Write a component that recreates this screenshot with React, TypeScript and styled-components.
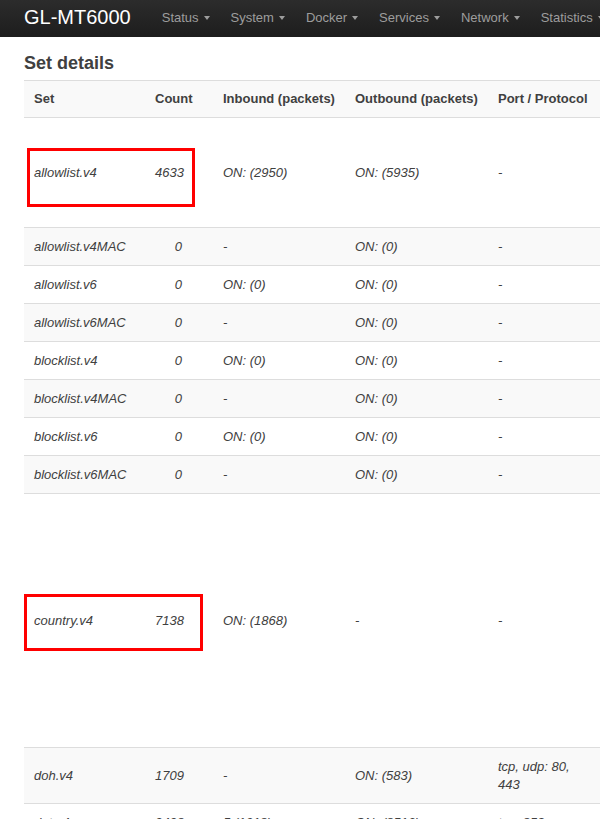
import React from "react";
import styled, {createGlobalStyle} from "styled-components";

type SetRow = {
    name: string;
    count: string;
    inbound: string;
    outbound: string;
    port: string;
    height?: number;
    highlight?: {left: number; top: number; width: number; height: number};
};

const menu = ["Status", "System", "Docker", "Services", "Network", "Statistics"];

const rows: SetRow[] = [
    {name: "allowlist.v4", count: "4633", inbound: "ON: (2950)", outbound: "ON: (5935)", port: "-", height: 110,
        highlight: {left: 3, top: 30, width: 168, height: 59}},
    {name: "allowlist.v4MAC", count: "0", inbound: "-", outbound: "ON: (0)", port: "-"},
    {name: "allowlist.v6", count: "0", inbound: "ON: (0)", outbound: "ON: (0)", port: "-"},
    {name: "allowlist.v6MAC", count: "0", inbound: "-", outbound: "ON: (0)", port: "-"},
    {name: "blocklist.v4", count: "0", inbound: "ON: (0)", outbound: "ON: (0)", port: "-"},
    {name: "blocklist.v4MAC", count: "0", inbound: "-", outbound: "ON: (0)", port: "-"},
    {name: "blocklist.v6", count: "0", inbound: "ON: (0)", outbound: "ON: (0)", port: "-"},
    {name: "blocklist.v6MAC", count: "0", inbound: "-", outbound: "ON: (0)", port: "-"},
    {name: "country.v4", count: "7138", inbound: "ON: (1868)", outbound: "-", port: "-", height: 254,
        highlight: {left: 0, top: 100, width: 179, height: 57}},
    {name: "doh.v4", count: "1709", inbound: "-", outbound: "ON: (583)", port: "tcp, udp: 80, 443"},
    {name: "dot.v4", count: "2428", inbound: "5 (1018)", outbound: "ON: (8516)", port: "tcp: 853"},
];

const App: React.FC = () => {
    return (
        <Root>
            <GlobalStyle/>

            <NavBar>
                <Brand>GL-MT6000</Brand>
                <Menu>
                    {menu.map(item => (
                        <MenuItem key={item}>
                            {item}
                            <Caret/>
                        </MenuItem>
                    ))}
                </Menu>
            </NavBar>

            <Main>
                <Title>Set details</Title>

                <Table>
                    <colgroup>
                        <col style={{width: 121}}/>
                        <col style={{width: 68}}/>
                        <col style={{width: 132}}/>
                        <col style={{width: 143}}/>
                        <col style={{width: 105}}/>
                        <col style={{width: 220}}/>
                    </colgroup>
                    <thead>
                    <HeadRow>
                        <Th>Set</Th>
                        <Th>Count</Th>
                        <Th>Inbound (packets)</Th>
                        <Th>Outbound (packets)</Th>
                        <Th>Port / Protocol</Th>
                        <Th>Comment</Th>
                    </HeadRow>
                    </thead>
                    <tbody>
                    {rows.map((row, i) => (
                        <Row key={row.name} striped={i % 2 === 1} rowHeight={row.height}>
                            <Td>
                                {row.name}
                                {row.highlight && (
                                    <Highlight style={{
                                        left: row.highlight.left,
                                        top: row.highlight.top,
                                        width: row.highlight.width,
                                        height: row.highlight.height,
                                    }}/>
                                )}
                            </Td>
                            <CountTd>{row.count}</CountTd>
                            <Td>{row.inbound}</Td>
                            <Td>{row.outbound}</Td>
                            <Td>{row.port}</Td>
                            <Td/>
                        </Row>
                    ))}
                    </tbody>
                </Table>
            </Main>
        </Root>
    )
}

export default App

const GlobalStyle = createGlobalStyle`
  html, body {
    margin: 0;
    padding: 0;
    overflow: hidden;
    background: #fff;
  }
  body {
    font-family: "Liberation Sans", Arial, sans-serif;
    font-size: 13px;
    color: #404040;
  }
`;
const Root = styled.div`
  width: 100%;
`;
const NavBar = styled.div`
  display: flex;
  align-items: center;
  box-sizing: border-box;
  height: 37px;
  padding: 0 24px 2px;
  background: linear-gradient(#2c2c2c, #1d1d1d);
  white-space: nowrap;
`;
const Brand = styled.div`
  font-size: 20px;
  color: #fff;
  margin-right: 31px;
`;
const Menu = styled.div`
  display: flex;
  align-items: center;
  gap: 21px;
`;
const MenuItem = styled.div`
  display: flex;
  align-items: center;
  font-size: 13px;
  color: #9d9d9d;
`;
const Caret = styled.span`
  display: inline-block;
  margin-left: 5px;
  margin-top: 1px;
  width: 0;
  height: 0;
  border-left: 3px solid transparent;
  border-right: 3px solid transparent;
  border-top: 4px solid #9d9d9d;
`;
const Main = styled.div`
  padding: 16px 24px 0;
`;
const Title = styled.h3`
  margin: 0 0 7px;
  font-size: 18px;
  line-height: 20px;
  font-weight: bold;
  color: #404040;
`;
const Table = styled.table`
  table-layout: fixed;
  width: 789px;
  border-collapse: collapse;
  border-spacing: 0;
`;
const HeadRow = styled.tr`
  background: #f9f9f9;
`;
const Th = styled.th`
  text-align: left;
  font-weight: bold;
  font-size: 13px;
  line-height: 18px;
  padding: 9px 8px 9px 10px;
  white-space: nowrap;
  border-top: 1px solid #ddd;
`;
const Row = styled.tr<{ striped: boolean; rowHeight?: number }>`
  background: ${props => props.striped ? "#f9f9f9" : "#fff"};
  height: ${props => props.rowHeight ? `${props.rowHeight}px` : "auto"};
`;
const Td = styled.td`
  position: relative;
  font-style: italic;
  font-size: 13px;
  line-height: 18px;
  padding: 10px 8px 9px 10px;
  vertical-align: middle;
  border-top: 1px solid #ddd;
`;
const CountTd = styled(Td)`
  text-align: right;
  padding-right: 31px;
`;
const Highlight = styled.div`
  position: absolute;
  box-sizing: border-box;
  border: 3px solid #f00;
  pointer-events: none;
`;
